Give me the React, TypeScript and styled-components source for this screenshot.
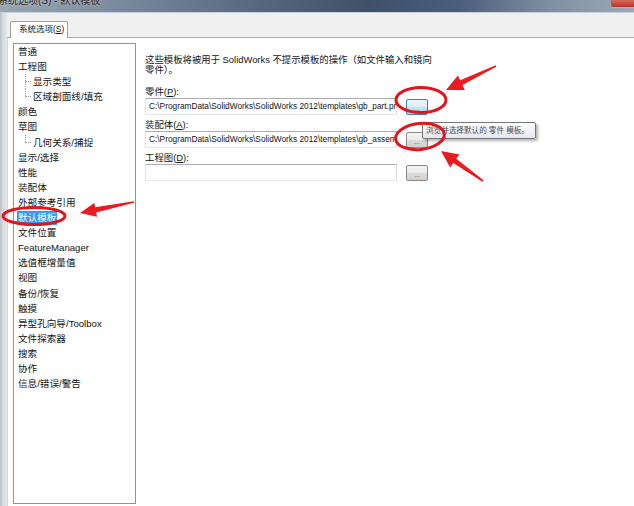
import React from "react";
import styled, { createGlobalStyle, css } from "styled-components";

const GlobalStyle = createGlobalStyle`
  html, body {
    margin: 0;
    padding: 0;
  }
  body {
    width: 634px;
    height: 506px;
    overflow: hidden;
    background: #f0f0f0;
    color: #141414;
    font-family: "Liberation Sans", "Noto Sans CJK SC", sans-serif;
  }
`;

type TreeItem = { label: string; level?: number; last?: boolean; selected?: boolean };

const treeItems: TreeItem[] = [
  { label: "普通" },
  { label: "工程图" },
  { label: "显示类型", level: 1 },
  { label: "区域剖面线/填充", level: 1, last: true },
  { label: "颜色" },
  { label: "草图" },
  { label: "几何关系/捕捉", level: 1, last: true },
  { label: "显示/选择" },
  { label: "性能" },
  { label: "装配体" },
  { label: "外部参考引用" },
  { label: "默认模板", selected: true },
  { label: "文件位置" },
  { label: "FeatureManager" },
  { label: "选值框增量值" },
  { label: "视图" },
  { label: "备份/恢复" },
  { label: "触摸" },
  { label: "异型孔向导/Toolbox" },
  { label: "文件探索器" },
  { label: "搜索" },
  { label: "协作" },
  { label: "信息/错误/警告" },
];

type Field = { name: string; key: string; path: string; hover?: boolean };

const fields: Field[] = [
  {
    name: "零件(",
    key: "P",
    path: "C:\\ProgramData\\SolidWorks\\SolidWorks 2012\\templates\\gb_part.prtdot",
    hover: true,
  },
  {
    name: "装配体(",
    key: "A",
    path: "C:\\ProgramData\\SolidWorks\\SolidWorks 2012\\templates\\gb_assembly.asmdot",
  },
  { name: "工程图(", key: "D", path: "" },
];

// hand-drawn red marker arrows: a tapered shaft ending in a wedge head
function arrowPoints(tip: [number, number], tail: [number, number], head = 16, half = 7) {
  const dx = tail[0] - tip[0];
  const dy = tail[1] - tip[1];
  const len = Math.hypot(dx, dy);
  const ux = dx / len;
  const uy = dy / len;
  const nx = -uy;
  const ny = ux;
  const bx = tip[0] + ux * head;
  const by = tip[1] + uy * head;
  const pts: [number, number][] = [
    tip,
    [bx + nx * half, by + ny * half],
    [bx + nx * 2.6, by + ny * 2.6],
    [tail[0] + nx * 0.8, tail[1] + ny * 0.8],
    [tail[0] - nx * 0.8, tail[1] - ny * 0.8],
    [bx - nx * 2.6, by - ny * 2.6],
    [bx - nx * half, by - ny * half],
  ];
  return pts.map((p) => `${p[0].toFixed(1)},${p[1].toFixed(1)}`).join(" ");
}

const App = () => {
  return (
    <>
      <GlobalStyle />
      <Window>
        <TitleBar>
          <TitleText>系统选项(S) - 默认模板</TitleText>
          <CloseButton />
        </TitleBar>
        <Body>
          <Frame />
          <Dialog>
            <TabStrip>
              <Tab>
                系统选项(<u>S</u>)
              </Tab>
            </TabStrip>
            <TabPanel>
              <TreeList>
                {treeItems.map((item) => (
                  <TreeRow key={item.label} $level={item.level ?? 0} $last={item.last}>
                    {item.selected ? <Selected>{item.label}</Selected> : item.label}
                  </TreeRow>
                ))}
              </TreeList>
              <Content>
                <Description>
                  这些模板将被用于 SolidWorks 不提示模板的操作（如文件输入和镜向
                  <br />
                  零件）。
                </Description>
                {fields.map((f) => (
                  <FieldGroup key={f.key}>
                    <FieldLabel>
                      {f.name}
                      <u>{f.key}</u>):
                    </FieldLabel>
                    <FieldRow>
                      <PathBox>{f.path}</PathBox>
                      <BrowseButton $hover={f.hover}>...</BrowseButton>
                    </FieldRow>
                  </FieldGroup>
                ))}
              </Content>
            </TabPanel>
          </Dialog>
        </Body>

        <Tooltip>浏览并选择默认的 零件 模板。</Tooltip>

        <Marks viewBox="0 0 634 506">
          <ellipse cx="34" cy="216" rx="31" ry="8.5" />
          <ellipse cx="421" cy="100" rx="25" ry="12.5" />
          <ellipse cx="420" cy="136.5" rx="24.5" ry="13" transform="rotate(-6 420 136.5)" />
          <polygon points={arrowPoints([80, 213], [134, 202])} />
          <polygon points={arrowPoints([446, 90], [496, 66], 17, 8)} />
          <polygon points={arrowPoints([441, 151], [483, 181], 17, 8)} />
        </Marks>
      </Window>
    </>
  );
};

export default App;

const Window = styled.div`
  position: relative;
  display: flex;
  flex-direction: column;
  width: 634px;
  height: 506px;
  overflow: hidden;
`;

const TitleBar = styled.div`
  display: flex;
  flex: none;
  height: 12px;
  overflow: hidden;
  border-bottom: 1px solid #c7cfd8;
  background: linear-gradient(
    90deg,
    #9aa5b1 0%,
    #7f8ea0 16%,
    #5a6c84 38%,
    #3e5169 58%,
    #4b5e78 72%,
    #7d8da0 86%,
    #9ea9b6 100%
  );
`;

const TitleText = styled.div`
  flex: 1;
  margin: -6px 0 0 -2px;
  color: #222;
  font-size: 10px;
  line-height: 13px;
  white-space: nowrap;
  text-shadow: 0 0 3px rgba(255, 255, 255, 0.7);
`;

const CloseButton = styled.div`
  flex: none;
  align-self: flex-start;
  width: 23px;
  height: 7px;
  border-radius: 0 0 0 3px;
  border-bottom: 1px solid #e9a39b;
  background: linear-gradient(#d66a5d, #b92f25);
`;

const Body = styled.div`
  display: flex;
  flex: 1;
  min-height: 0;
`;

const Frame = styled.div`
  flex: none;
  width: 7px;
  background: linear-gradient(90deg, #b9bec4 0%, #d5d9dd 35%, #e6e7e8 100%);
`;

const Dialog = styled.div`
  display: flex;
  flex: 1;
  flex-direction: column;
  background: #f0f0f0;
`;

const TabStrip = styled.div`
  display: flex;
  flex: none;
  align-items: flex-end;
  height: 24px;
  padding-left: 3px;
`;

const Tab = styled.div`
  position: relative;
  z-index: 1;
  box-sizing: border-box;
  width: 58px;
  height: 17px;
  margin-bottom: -1px;
  padding-left: 8px;
  border: 1px solid #a0a0a0;
  border-bottom: none;
  border-radius: 2px 2px 0 0;
  background: #fff;
  font-size: 8.5px;
  line-height: 15px;
  white-space: nowrap;
`;

const TabPanel = styled.div`
  display: flex;
  flex: 1;
  min-height: 0;
  padding: 5px 0 0 5px;
  border-top: 1px solid #a7a7a7;
  border-left: 1px solid #d4d4d4;
  background: #fff;
`;

const TreeList = styled.div`
  flex: none;
  box-sizing: border-box;
  width: 123px;
  height: 461px;
  border: 1px solid #8e9299;
  background: #fff;
`;

const treeLines = css`
  &::before {
    content: "";
    position: absolute;
    left: 11px;
    top: 7px;
    width: 6px;
    border-top: 1px dotted #a0a0a0;
  }
  &::after {
    content: "";
    position: absolute;
    left: 11px;
    top: 0;
    height: ${({ $last }: { $last?: boolean }) => ($last ? "7px" : "100%")};
    border-left: 1px dotted #a0a0a0;
  }
`;

const TreeRow = styled.div<{ $level: number; $last?: boolean }>`
  position: relative;
  height: 15.1px;
  padding-left: ${({ $level }) => ($level ? 19 : 4)}px;
  font-size: 9.6px;
  line-height: 15px;
  white-space: nowrap;
  ${({ $level }) => $level > 0 && treeLines}
`;

const Selected = styled.span`
  display: inline-block;
  margin-left: -1px;
  padding: 0 1px;
  background: #3399ff;
  color: #fff;
  line-height: 14px;
`;

const Content = styled.div`
  display: flex;
  flex-direction: column;
  margin-left: 9px;
  padding-top: 12px;
`;

const Description = styled.div`
  font-size: 9.4px;
  line-height: 10px;
  white-space: nowrap;
  margin-bottom: 7px;
`;

const FieldGroup = styled.div`
  display: flex;
  flex-direction: column;
  margin-top: 5px;
`;

const FieldLabel = styled.div`
  height: 10px;
  margin-bottom: 1px;
  font-size: 9.4px;
  line-height: 10px;
  white-space: nowrap;
`;

const FieldRow = styled.div`
  display: flex;
  align-items: center;
  height: 17px;
`;

const PathBox = styled.div`
  box-sizing: border-box;
  width: 252px;
  height: 17px;
  padding-left: 3px;
  overflow: hidden;
  border: 1px solid;
  border-color: #abadb3 #dbdfe6 #e3e9ef #e2e3ea;
  font-size: 8.3px;
  line-height: 15px;
  white-space: nowrap;
`;

const BrowseButton = styled.div<{ $hover?: boolean }>`
  box-sizing: border-box;
  width: 22px;
  height: 16px;
  margin: 1px 0 0 9px;
  border: 1px solid ${({ $hover }) => ($hover ? "#3c7fb1" : "#8a8a8a")};
  border-radius: 2px;
  background: ${({ $hover }) =>
    $hover
      ? "linear-gradient(#eaf6fd 0%, #d9f0fc 50%, #bee6fd 51%, #a7d9f5 100%)"
      : "linear-gradient(#f4f4f4 0%, #ebebeb 50%, #dddddd 51%, #cfcfcf 100%)"};
  color: #555;
  font-size: 7px;
  line-height: 17px;
  text-align: center;
`;

const Tooltip = styled.div`
  position: absolute;
  left: 422px;
  top: 122px;
  box-sizing: border-box;
  height: 17px;
  padding: 0 6px 0 3px;
  border: 1px solid #767676;
  border-radius: 2px;
  background: linear-gradient(#ffffff, #e4e5f0);
  box-shadow: 2px 2px 3px rgba(0, 0, 0, 0.3);
  color: #4c4c4c;
  font-size: 7.6px;
  line-height: 15px;
  white-space: nowrap;
`;

const Marks = styled.svg`
  position: absolute;
  left: 0;
  top: 0;
  width: 634px;
  height: 506px;
  pointer-events: none;

  ellipse {
    fill: none;
    stroke: #e0161d;
    stroke-width: 3;
  }
  polygon {
    fill: #ea1c22;
  }
`;
